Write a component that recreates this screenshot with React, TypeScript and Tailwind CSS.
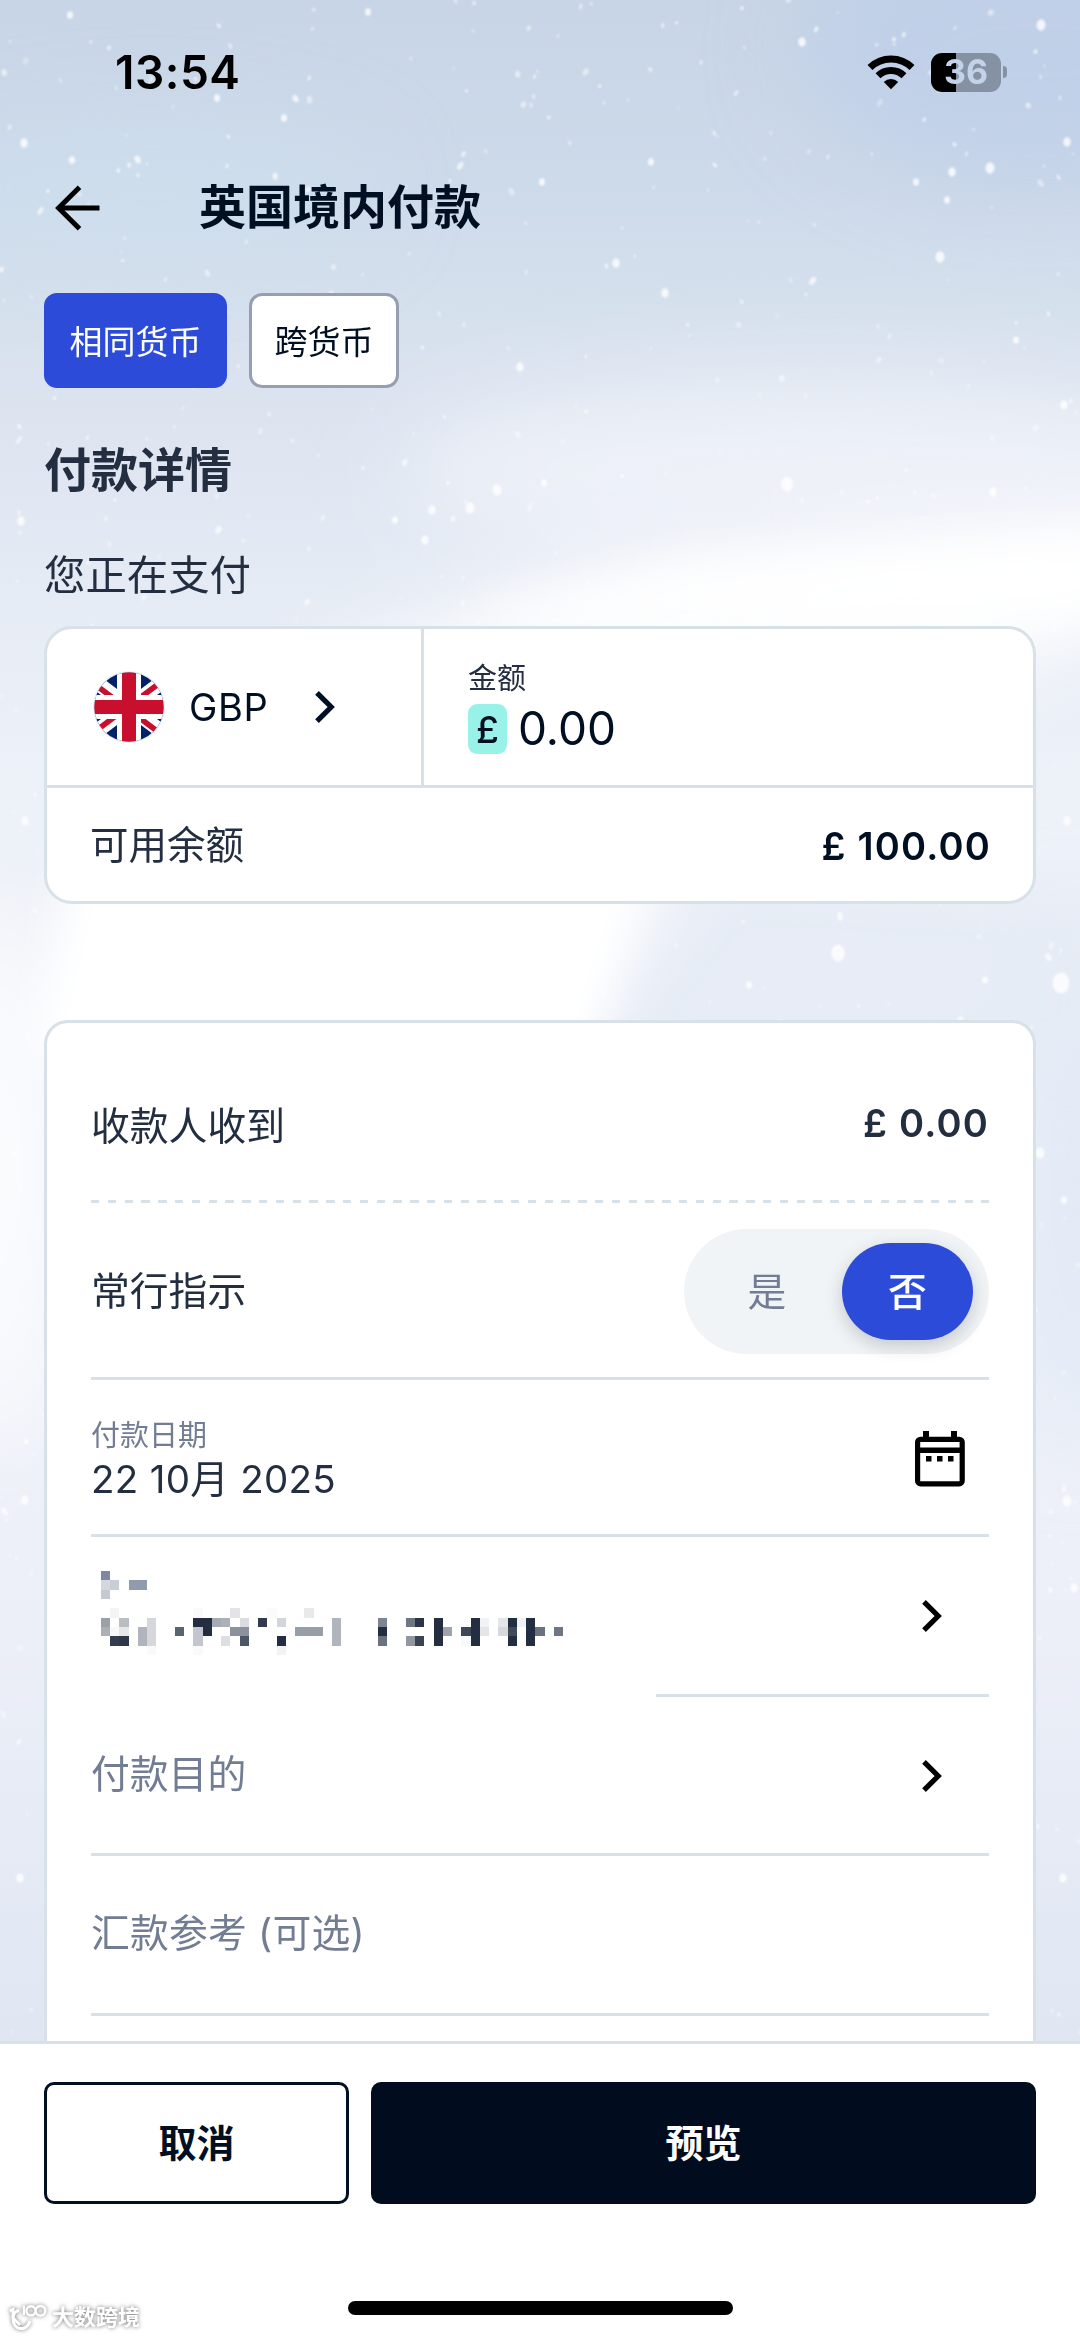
import type { ReactNode } from "react";
import clsx from "clsx";

// column, row, width, height, fill
const MOSAIC: [number, number, number, number, string][] = [
  [0, 0, 1, 1, "#7e899f"],
  [0, 1, 1, 1, "#d3d7e1"],
  [1, 1, 1, 1, "#c9cdd6"],
  [3, 1, 2, 1, "#919bae"],
  [0, 2, 1, 1, "#c4c9d3"],
  [1, 4, 1, 1, "#f4f4f5"],
  [10, 4, 1, 1, "#fafafa"],
  [14, 4, 1, 1, "#e3e4e7"],
  [18, 4, 1, 1, "#fafcfc"],
  [22, 4, 1, 1, "#e8e9eb"],
  [0, 5, 1, 1, "#9ba1a9"],
  [2, 5, 1, 1, "#babdc2"],
  [5, 5, 1, 3, "#d5d7dc"],
  [10, 5, 2, 1, "#232e41"],
  [12, 5, 1, 1, "#a5aab3"],
  [13, 5, 1, 1, "#acb0b8"],
  [15, 5, 1, 1, "#dadce1"],
  [17, 5, 1, 1, "#313b4d"],
  [19, 5, 1, 1, "#d2d6da"],
  [25, 5, 1, 3, "#b0b5bd"],
  [30, 5, 1, 1, "#7d8592"],
  [33, 5, 1, 1, "#6e7683"],
  [34, 5, 1, 1, "#2b3548"],
  [36, 5, 1, 3, "#232e41"],
  [40, 5, 1, 3, "#232e41"],
  [41, 5, 1, 1, "#f2f3f4"],
  [43, 5, 1, 1, "#e4e5e8"],
  [44, 5, 1, 1, "#232e41"],
  [45, 5, 1, 1, "#f1f2f3"],
  [46, 5, 1, 3, "#232e41"],
  [0, 6, 1, 1, "#abb0b6"],
  [1, 6, 1, 1, "#f8f8f8"],
  [2, 6, 1, 1, "#e6e7e9"],
  [4, 6, 1, 2, "#b0b5bd"],
  [8, 6, 1, 1, "#5a6370"],
  [10, 6, 1, 2, "#c3c7cd"],
  [11, 6, 1, 1, "#232e41"],
  [14, 6, 2, 1, "#8c929d"],
  [21, 6, 3, 1, "#989ea6"],
  [30, 6, 1, 1, "#232e41"],
  [37, 6, 1, 1, "#9ea3ac"],
  [39, 6, 1, 1, "#3d4857"],
  [41, 6, 1, 1, "#e3e5e8"],
  [43, 6, 1, 1, "#d6d8dd"],
  [44, 6, 1, 1, "#3f4a5a"],
  [47, 6, 1, 1, "#6a7280"],
  [49, 6, 1, 1, "#6e7683"],
  [1, 7, 1, 1, "#323d4e"],
  [2, 7, 1, 1, "#2d3849"],
  [13, 7, 1, 1, "#dcdee2"],
  [15, 7, 1, 1, "#4c5664"],
  [19, 7, 1, 1, "#232e41"],
  [30, 7, 1, 1, "#6a7280"],
  [33, 7, 1, 1, "#9097a1"],
  [34, 7, 1, 1, "#3a4455"],
  [39, 7, 1, 1, "#f8f9fb"],
  [44, 7, 1, 1, "#232e41"],
  [5, 8, 1, 1, "#fafafa"],
  [10, 8, 1, 1, "#fafafa"],
  [19, 8, 1, 1, "#f2f4f4"],
];

// x, y, radius
const BIG_FLAKES: [number, number, number][] = [
  [24, 143, 5], [1041, 25, 6], [990, 168, 6], [952, 172, 5], [940, 257, 6],
  [616, 263, 5], [665, 293, 5], [520, 367, 5], [542, 182, 4], [651, 162, 4],
  [947, 200, 4], [1067, 142, 5], [802, 42, 5], [284, 118, 4], [217, 98, 4],
  [72, 160, 4], [916, 182, 4], [1064, 405, 5], [1016, 340, 4], [368, 12, 4],
  [70, 15, 4], [497, 490, 6], [787, 484, 8], [470, 508, 6], [432, 510, 5],
  [993, 492, 5], [425, 540, 5], [544, 483, 4], [395, 520, 4], [21, 521, 5],
  [838, 953, 9], [1061, 983, 11], [1040, 1153, 6], [749, 985, 4], [985, 980, 4],
  [1064, 1200, 4], [1067, 1501, 6], [1074, 1588, 5], [25, 1500, 5], [20, 1878, 5],
  [1063, 1878, 5], [25, 821, 5], [1067, 821, 5],
];

function makeFlakes() {
  let seed = 7;
  const rnd = () => {
    seed = (seed * 16807) % 2147483647;
    return seed / 2147483647;
  };
  const flakes = [];
  for (let i = 0; i < 900; i++) {
    const big = rnd() > 0.88;
    flakes.push({
      x: rnd() * 1080,
      y: rnd() * 2045,
      rx: (big ? 2 : 1) + rnd() * 1,
      ry: (big ? 2.8 : 1.4) + rnd() * 1.8,
      tilt: rnd() * 80 - 40,
      o: 0.3 + rnd() * 0.45,
    });
  }
  return flakes;
}

const FLAKES = makeFlakes();

function SnowBackground() {
  return (
    <svg className="absolute inset-0" width="1080" height="2337" viewBox="0 0 1080 2337">
      <defs>
        <linearGradient id="sky" x1="0" y1="0" x2="0" y2="1">
          <stop offset="0" stopColor="#c8d5e6" />
          <stop offset="0.08" stopColor="#cddaea" />
          <stop offset="0.13" stopColor="#d5e0ed" />
          <stop offset="0.18" stopColor="#dde4f0" />
          <stop offset="0.24" stopColor="#e4eaf4" />
          <stop offset="0.33" stopColor="#edf1f8" />
          <stop offset="0.5" stopColor="#f0f3fa" />
          <stop offset="0.7" stopColor="#eceff8" />
          <stop offset="0.88" stopColor="#dfe6f2" />
          <stop offset="1" stopColor="#dfe6f2" />
        </linearGradient>
        <filter id="haze" x="-50%" y="-50%" width="200%" height="200%">
          <feGaussianBlur stdDeviation="45" />
        </filter>
        <filter id="edge" x="-50%" y="-50%" width="200%" height="200%">
          <feGaussianBlur stdDeviation="22" />
        </filter>
        <filter id="soft" x="-50%" y="-50%" width="200%" height="200%">
          <feGaussianBlur stdDeviation="1" />
        </filter>
      </defs>
      <rect width="1080" height="2337" fill="url(#sky)" />
      <g filter="url(#haze)">
        <ellipse cx="1040" cy="50" rx="240" ry="130" fill="#bccde8" opacity="0.65" />
        <ellipse cx="150" cy="190" rx="220" ry="60" fill="#cfdfee" opacity="0.7" />
        <ellipse cx="820" cy="470" rx="420" ry="90" fill="#f1f4fa" opacity="0.8" />
        <path d="M300 680 L560 590 L1180 530 L1180 610 L900 700 L330 720 Z" fill="#fff" />
        <ellipse cx="0" cy="1180" rx="50" ry="280" fill="#fff" opacity="0.9" />
        <ellipse cx="1080" cy="1180" rx="60" ry="260" fill="#e0e8f5" />
      </g>
      <g filter="url(#edge)">
        <path d="M690 560 L1120 530 L1120 615 L620 620 L440 620 Z" fill="#fff" opacity="0.9" />
        <path d="M70 860 L660 860 L590 1060 L30 1060 Z" fill="#fff" />
        <path d="M720 880 L1100 900 L1100 1060 L590 1060 Z" fill="#e5ebf5" opacity="0.9" />
      </g>
      <g fill="#fff" filter="url(#soft)">
        {FLAKES.map((f, i) => (
          <ellipse
            key={i}
            cx={f.x}
            cy={f.y}
            rx={f.rx}
            ry={f.ry}
            opacity={f.o}
            transform={`rotate(${f.tilt} ${f.x} ${f.y})`}
          />
        ))}
        {BIG_FLAKES.map(([x, y, r]) => (
          <ellipse key={`${x}-${y}`} cx={x} cy={y} rx={r * 0.75} ry={r * 0.95} opacity="0.8" />
        ))}
      </g>
    </svg>
  );
}

function WifiIcon() {
  return (
    <svg width="48" height="36" viewBox="0 0 48 36" fill="none" stroke="#000" strokeWidth="7">
      <path d="M3 13.6 A30 30 0 0 1 45 13.6" />
      <path d="M11 21.7 A18.6 18.6 0 0 1 37 21.7" />
      <path d="M24 35.3 L16.8 28 A10.3 10.3 0 0 1 31.2 28 Z" fill="#000" stroke="none" />
    </svg>
  );
}

function Battery() {
  return (
    <div className="flex items-center gap-[2px]">
      <div className="flex h-[39px] w-[70px] items-center justify-center overflow-hidden rounded-[11px] bg-[linear-gradient(90deg,#000_36%,#8592a3_36%)] text-[34px] leading-none font-bold text-[#c4d2e9]">
        36
      </div>
      <div className="h-[12px] w-[4px] rounded-r-full bg-[#8592a3]" />
    </div>
  );
}

function ArrowLeft() {
  return (
    <svg width="46" height="46" viewBox="0 0 46 46" fill="none" stroke="#000" strokeWidth="5">
      <path d="M45.5 23 H5" />
      <path d="M25.5 2.2 L4.6 23 L25.5 43.8" />
    </svg>
  );
}

function ChevronRight({ color = "#000" }: { color?: string }) {
  return (
    <svg width="22" height="34" viewBox="0 0 22 34" fill="none" stroke={color} strokeWidth="5.2">
      <path d="M3 2.8 L17.2 17 L3 31.2" />
    </svg>
  );
}

function CalendarIcon() {
  return (
    <svg width="50" height="56" viewBox="0 0 50 56">
      <path d="M8 0 H14 V8 H8 Z M36 0 H42 V8 H36 Z" />
      <rect x="2.6" y="8.3" width="44.6" height="44.6" rx="3" fill="none" stroke="#000" strokeWidth="5.2" />
      <path d="M2 16.5 H48 V22 H2 Z" />
      <path d="M11 25 H16.5 V30.5 H11 Z M22 25 H27.5 V30.5 H22 Z M33 25 H38.5 V30.5 H33 Z" />
    </svg>
  );
}

function FlagGB() {
  return (
    <svg width="72" height="72" viewBox="0 0 72 72">
      <clipPath id="flag">
        <circle cx="36" cy="36" r="34.7" />
      </clipPath>
      <circle cx="36" cy="36" r="36" fill="#e9edf6" />
      <g clipPath="url(#flag)">
        <path d="M0 0 H72 V72 H0 Z" fill="#012169" />
        <path d="M-12 0 L84 72 M84 0 L-12 72" stroke="#fff" strokeWidth="14.5" />
        <path d="M36 36 L-12 0 M36 36 L84 72" stroke="#c8102e" strokeWidth="5.5" transform="translate(0 3)" />
        <path d="M36 36 L84 0 M36 36 L-12 72" stroke="#c8102e" strokeWidth="5.5" transform="translate(0 -1)" />
        <path d="M36 0 V72 M0 36 H72" stroke="#fff" strokeWidth="24" />
        <path d="M36 0 V72 M0 36 H72" stroke="#c8102e" strokeWidth="14" />
      </g>
    </svg>
  );
}

function Chip({ active, children }: { active?: boolean; children: ReactNode }) {
  return (
    <button
      className={clsx(
        "flex h-[95px] items-center justify-center rounded-[13px] border-[3px] pt-[3px] text-[33px] leading-none",
        active
          ? "w-[183px] border-[#2c4bd9] bg-[#2c4bd9] text-white"
          : "w-[150px] border-[#969fb1] bg-white text-[#010f22]"
      )}
    >
      {children}
    </button>
  );
}

function Row({ className, children }: { className?: string; children: ReactNode }) {
  return (
    <div className={clsx("flex shrink-0 items-center justify-between border-b-[3px] border-[#d8e1e7]", className)}>
      {children}
    </div>
  );
}

export default function App() {
  return (
    <div className="relative flex h-[2337px] w-[1080px] flex-col overflow-hidden font-[Inter,'Noto_Sans_CJK_SC',sans-serif] text-[#232e41]">
      <SnowBackground />

      <div className="relative flex min-h-0 flex-1 flex-col px-[44px]">
        {/* status bar */}
        <div className="flex h-[144px] shrink-0 items-center justify-between pr-[29px] pl-[71px]">
          <span className="text-[46px] leading-none font-semibold tracking-[0.5px] text-black">13:54</span>
          <div className="flex items-center gap-[16px]">
            <WifiIcon />
            <Battery />
          </div>
        </div>

        {/* header */}
        <div className="flex h-[128px] shrink-0 items-center pl-[10px]">
          <ArrowLeft />
          <h1 className="ml-[99px] pb-[3px] text-[47px] leading-none font-semibold text-[#010f22]">英国境内付款</h1>
        </div>

        <div className="mt-[21px] flex shrink-0 gap-[22px]">
          <Chip active>相同货币</Chip>
          <Chip>跨货币</Chip>
        </div>

        <h2 className="mt-[52px] h-[60px] shrink-0 text-[47px] leading-[60px] font-semibold">付款详情</h2>
        <p className="mt-[50px] h-[50px] shrink-0 text-[41.4px] leading-[50px]">您正在支付</p>

        {/* amount */}
        <div className="mt-[26px] shrink-0 rounded-[28px] border-[3px] border-[#d8e1e7] bg-white">
          <div className="flex h-[159px] border-b-[3px] border-[#d8e1e7]">
            <div className="flex w-[377px] items-center border-r-[3px] border-[#d8e1e7] pl-[46px]">
              <FlagGB />
              <span className="ml-[24px] w-[125px] text-[38px] leading-none tracking-[0.6px] text-[#010f22]">GBP</span>
              <ChevronRight color="#010f22" />
            </div>
            <div className="flex flex-col pt-[33px] pl-[44px]">
              <span className="text-[29px] leading-[34px]">金额</span>
              <div className="mt-[8px] flex items-center text-[#010f22]">
                <span className="flex h-[50px] w-[39px] items-center justify-center rounded-[9px] bg-[#98f2e8] text-[37px] leading-none font-medium">
                  £
                </span>
                <span className="ml-[11px] pb-[2px] text-[46px] leading-[48px]">0.00</span>
              </div>
            </div>
          </div>
          <div className="flex h-[113px] items-center justify-between pt-[2px] pr-[42px] pl-[43px] leading-none">
            <span className="text-[38.5px]">可用余额</span>
            <span className="text-[38px] font-semibold tracking-[1.2px] text-[#010f22]">£ 100.00</span>
          </div>
        </div>

        {/* payment form */}
        <div className="mt-[116px] flex min-h-0 flex-1 flex-col overflow-hidden rounded-t-[24px] border-[3px] border-b-0 border-[#d8e1e7] bg-white px-[44px] text-[38.8px] leading-none">
          <div className="flex h-[177px] shrink-0 items-center justify-between pt-[26px]">
            <span className="pt-[3px]">收款人收到</span>
            <span className="pb-[4px] text-[38px] font-semibold tracking-[1.2px]">£ 0.00</span>
          </div>
          <div className="h-[3px] shrink-0 bg-[repeating-linear-gradient(90deg,#d8e1e7_0_8.4px,transparent_8.4px_16.8px)]" />

          <Row className="h-[177px] pt-[3px]">
            <span>常行指示</span>
            <div className="flex h-[125px] w-[305px] items-center rounded-full bg-[#f1f4f7] py-[14px] pr-[16px] pl-[8px]">
              <span className="flex-1 pt-[2px] text-center text-[#727c92]">是</span>
              <span className="flex h-[97px] w-[131px] items-center justify-center rounded-full bg-[#2c4bd9] pt-[2px] font-medium text-white shadow-[0_6px_18px_rgba(0,0,0,0.18)]">
                否
              </span>
            </div>
          </Row>

          <Row className="h-[157px] pt-[3px] pr-[24px]">
            <div className="flex flex-col pt-[5px]">
              <span className="text-[29px] leading-[37px] text-[#727c92]">付款日期</span>
              <span className="text-[38.5px] leading-[51px] tracking-[0.3px]">22 10月 2025</span>
            </div>
            <CalendarIcon />
          </Row>

          <div className="flex h-[157px] shrink-0 items-center justify-between pr-[46px]">
            <svg
              className="mb-[5px] ml-[10px]"
              width="462"
              height="84"
              viewBox="0 0 50 9"
              preserveAspectRatio="none"
              shapeRendering="crispEdges"
            >
              {MOSAIC.map(([x, y, w, h, fill]) => (
                <rect key={`${x}-${y}`} x={x} y={y} width={w} height={h} fill={fill} />
              ))}
            </svg>
            <ChevronRight />
          </div>
          <div className="h-[3px] w-[333px] shrink-0 self-end bg-[#d8e1e7]" />

          <Row className="h-[159px] pr-[46px] text-[#727c92]">
            <span className="pb-[2px]">付款目的</span>
            <div className="pt-[2px]">
              <ChevronRight />
            </div>
          </Row>

          <Row className="h-[160px] pb-[3px] text-[#727c92]">
            <span className="tracking-[0.2px]">汇款参考 (可选)</span>
          </Row>
        </div>
      </div>

      {/* actions */}
      <div className="relative flex h-[296px] shrink-0 flex-col border-t-[3px] border-[#d8e1e7] bg-white px-[44px] pt-[38px]">
        <div className="flex h-[122px] gap-[22px] text-[38px] leading-none font-semibold">
          <button className="w-[305px] rounded-[10px] border-[3px] border-[#010f22] bg-white text-[#010f22]">取消</button>
          <button className="flex-1 rounded-[10px] bg-[#010d1f] text-white">预览</button>
        </div>
        <div className="mt-[97px] h-[14px] w-[385px] self-center rounded-full bg-black" />

        <div className="absolute bottom-[6px] left-[8px] flex items-center gap-[5px] text-white drop-shadow-[0_0_2px_rgba(0,0,0,0.55)]">
          <svg width="39" height="27" viewBox="0 0 39 27" fill="none" stroke="#fff" strokeWidth="3">
            <path d="M1.5 7 L5 5.5 V14 C5 27 19 28 22 17" />
            <path d="M5 13 C6 8 8 7 11 6.5 M5 14 L12 21" />
            <path d="M16 1.5 V11" strokeWidth="2.4" />
            <circle cx="23" cy="6.8" r="4.6" strokeWidth="2.4" />
            <circle cx="32.5" cy="6.8" r="4.8" strokeWidth="2.4" />
          </svg>
          <span className="text-[22px] leading-[27px] font-bold">大数跨境</span>
        </div>
      </div>
    </div>
  );
}
